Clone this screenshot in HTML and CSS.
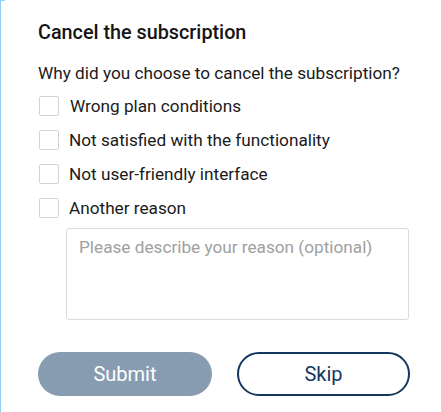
FILE: index.html
```html
<!DOCTYPE html>
<html lang="en">

<head>
    <meta charset="UTF-8">
    <meta name="viewport" content="width=device-width, initial-scale=1.0">
    <title>Cancel the subscription</title>
    <link rel="stylesheet" href="styles.css">
</head>

<body>
    <div class="frame">
        <div class="dialog">
            <h2 class="title">Cancel the subscription</h2>
            <p class="question">Why did you choose to cancel the subscription?</p>

            <ul class="reasons">
                <li class="reason"><span class="box"></span><span class="label first">Wrong plan conditions</span></li>
                <li class="reason"><span class="box"></span><span class="label">Not satisfied with the functionality</span></li>
                <li class="reason"><span class="box"></span><span class="label">Not user-friendly interface</span></li>
                <li class="reason"><span class="box"></span><span class="label">Another reason</span></li>
            </ul>

            <textarea class="comment" placeholder="Please describe your reason (optional)"></textarea>

            <div class="actions">
                <button class="btn btn-submit">Submit</button>
                <button class="btn btn-skip">Skip</button>
            </div>
        </div>
    </div>
</body>

</html>
```

FILE: styles.css
```css
body {
    margin: 0;
    background: #fff;
    font-family: Roboto, "Noto Sans", sans-serif;
    color: #1a1a1a;
}

.frame {
    position: relative;
    height: 412px;
    border-left: 1px solid #8ecdf7;
    box-sizing: border-box;
}

/* little top piece of the outer frame */
.frame::before {
    content: "";
    position: absolute;
    top: 0;
    left: 0;
    width: 4px;
    height: 1px;
    background: #8ecdf7;
}

.dialog {
    padding: 21px 0 0 37px;
}

.title {
    margin: 0;
    font-size: 19.8px;
    line-height: 24px;
    font-weight: 500;
    color: #151515;
}

.question {
    margin: 17px 0 0;
    font-size: 17.2px;
    line-height: 22px;
}

.reasons {
    list-style: none;
    margin: 5px 0 0;
    padding: 0;
}

.reason {
    display: flex;
    align-items: center;
    height: 34px;
    font-size: 17.2px;
}

.box {
    width: 18px;
    height: 18px;
    border: 1px solid #d3d3d3;
    border-radius: 2px;
    margin-left: 1px;
    margin-right: 10px;
}

.label.first {
    margin-left: 1px;
}

.comment {
    display: block;
    box-sizing: border-box;
    width: 343px;
    height: 92px;
    margin: 3px 0 0 28px;
    padding: 7px 12px;
    border: 1px solid #dcdcdc;
    border-radius: 3px;
    resize: none;
    font-family: inherit;
    font-size: 17.2px;
    line-height: 22px;
}

.comment::placeholder {
    color: #a0a0a0;
}

.actions {
    display: flex;
    gap: 25px;
    margin-top: 32px;
}

.btn {
    height: 44px;
    border-radius: 22px;
    font-family: inherit;
    font-size: 20px;
    cursor: pointer;
}

.btn-submit {
    width: 174px;
    border: none;
    background: #879cb1;
    color: #fff;
}

.btn-skip {
    width: 173px;
    border: 2px solid #14375f;
    background: #fff;
    color: #14375f;
}
```
